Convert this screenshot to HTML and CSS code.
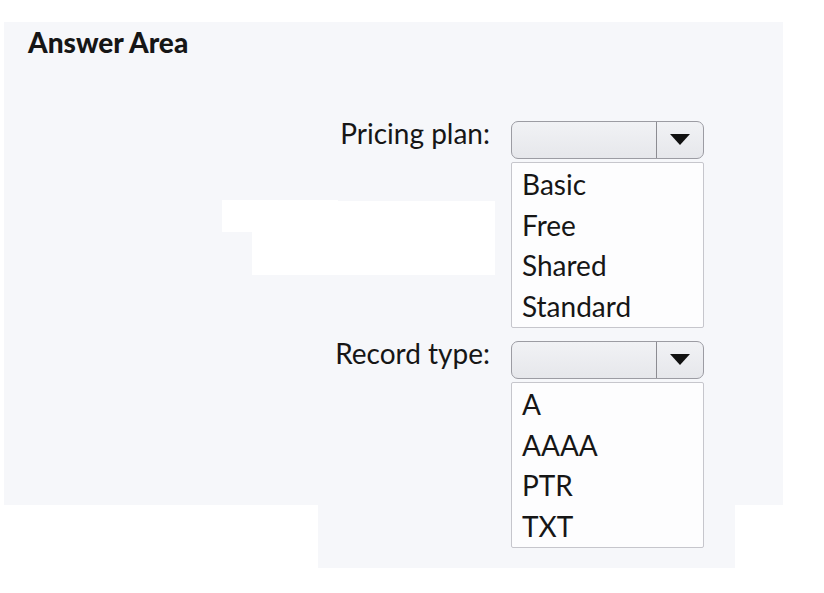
FILE: index.html
```html
<!DOCTYPE html>
<html lang="en">
<head>
  <meta charset="UTF-8" />
  <meta name="viewport" content="width=device-width, initial-scale=1.0"/>
  <title>Answer Area</title>
  <link rel="stylesheet" href="styles.css">
</head>
<body>
  <div class="sheet">
    <div class="smudge smudge-a"></div>
    <div class="smudge smudge-b"></div>

    <h1>Answer Area</h1>

    <div class="form">
      <label class="label">Pricing plan:</label>
      <div class="field">
        <div class="select">
          <span class="select-value"></span>
          <span class="select-btn"><span class="arrow"></span></span>
        </div>
        <ul class="options">
          <li>Basic</li>
          <li>Free</li>
          <li>Shared</li>
          <li>Standard</li>
        </ul>
      </div>

      <label class="label">Record type:</label>
      <div class="field">
        <div class="select">
          <span class="select-value"></span>
          <span class="select-btn"><span class="arrow"></span></span>
        </div>
        <ul class="options">
          <li>A</li>
          <li>AAAA</li>
          <li>PTR</li>
          <li>TXT</li>
        </ul>
      </div>
    </div>
  </div>
  <div class="sheet-foot"></div>
</body>
</html>
```

FILE: styles.css
```css
body {
  margin: 0;
  background: #fff;
  font-family: Lato, "Open Sans", sans-serif;
  color: #161616;
}

.sheet {
  position: relative;
  margin: 22px 0 0 4px;
  width: 779px;
  height: 483px;
  background: #f6f7fa;
}

.sheet-foot {
  margin-left: 318px;
  width: 417px;
  height: 63px;
  background: #f6f7fa;
}

.smudge {
  position: absolute;
  background: #fff;
}

.smudge-a {
  left: 218px;
  top: 178px;
  width: 116px;
  height: 32px;
}

.smudge-b {
  left: 248px;
  top: 179px;
  width: 243px;
  height: 74px;
}

h1 {
  position: relative;
  margin: 0;
  padding: 3px 0 0 24px;
  font-size: 28px;
  line-height: 34px;
  font-weight: 900;
}

.form {
  position: relative;
  display: grid;
  grid-template-columns: 486px 193px;
  column-gap: 21px;
  row-gap: 13px;
  margin-top: 62px;
}

.label {
  text-align: right;
  font-size: 28px;
  line-height: 24px;
}

.field {
  display: flex;
  flex-direction: column;
  gap: 3px;
}

.select {
  display: flex;
  height: 36px;
  border: 1px solid #9c9ca3;
  border-radius: 7px;
  background: linear-gradient(#f1f2f5, #e6e7eb);
}

.select-value {
  flex: 1;
}

.select-btn {
  display: flex;
  align-items: center;
  justify-content: center;
  width: 46px;
  border-left: 1px solid #8c8c92;
}

.arrow {
  width: 0;
  height: 0;
  margin-bottom: 2px;
  border-left: 10px solid transparent;
  border-right: 10px solid transparent;
  border-top: 11px solid #111;
}

.options {
  list-style: none;
  margin: 0;
  padding: 1px 0 1px 10px;
  border: 1px solid #c6c6cc;
  border-radius: 2px;
  background: #fdfdfe;
  font-size: 28px;
  line-height: 40.5px;
}
```
